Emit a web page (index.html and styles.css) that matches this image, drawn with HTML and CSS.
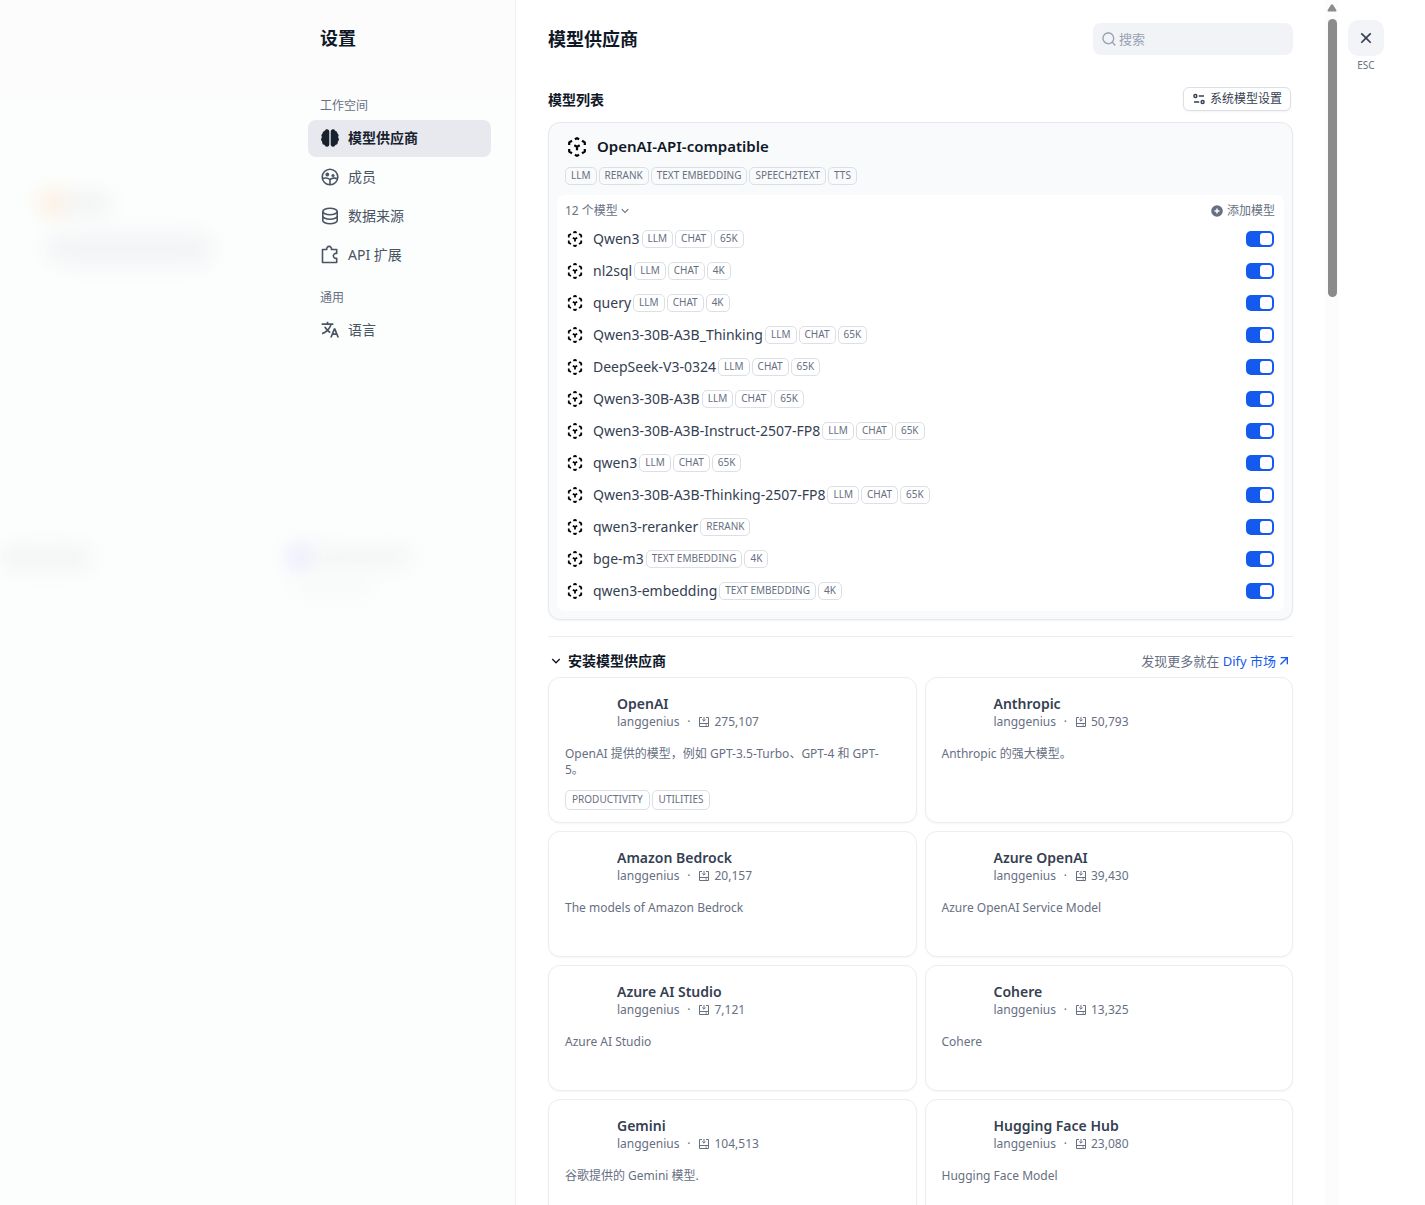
FILE: index.html
```html
<!DOCTYPE html>
<html lang="zh-CN">
<head>
<meta charset="utf-8">
<meta name="viewport" content="width=device-width, initial-scale=1">
<title>设置 - 模型供应商</title>
<link rel="stylesheet" href="styles.css">
</head>
<body>
<svg class="sprite" aria-hidden="true">
  <symbol id="i-cube" viewBox="0 0 20 20"><g fill="none" stroke="currentColor" stroke-width="2.200" stroke-linejoin="round"><path d="M7.900 2.200 10 1.100l2.100 1.100M15 3.700l2.800 1.700v2.600M17.800 12v2.600L15 16.300M12.100 17.800 10 18.900l-2.100-1.100M5 16.300l-2.800-1.700V12M2.200 8V5.400L5 3.700M7.300 8.300 10 9.900l2.700-1.600M10 9.500v3.700"/></g></symbol>
  <symbol id="i-down" viewBox="0 0 24 24"><path fill="currentColor" d="M11.9999 13.1714L16.9497 8.22168L18.3639 9.63589L11.9999 15.9999L5.63599 9.63589L7.0502 8.22168L11.9999 13.1714Z"/></symbol>
  <symbol id="i-install" viewBox="0 0 12 12"><path fill="none" stroke="currentColor" d="M4 1.500H1.500v9h9v-9H8M1.500 7.500h9M6 1v4M4.300 3.500 6 5.200l1.700-1.700M7.500 9h1.400"/></symbol>
</svg>

<div class="settings">
  <div class="backdrop" aria-hidden="true">
    <span class="blob blob-orange"></span><span class="blob blob-title"></span><span class="blob blob-text"></span>
    <span class="blob blob-left"></span><span class="blob blob-violet"></span><span class="blob blob-node"></span>
    <span class="blob blob-sub"></span>
  </div>

  <aside class="sidebar">
    <h1 class="heading">设置</h1>
    <nav class="nav">
      <section class="nav-group">
        <h2 class="nav-label">工作空间</h2>
        <a class="nav-item active" href="#provider"><svg viewBox="0 0 20 20"><g fill="currentColor"><path id="lobe" d="M9.300 3.800V16.200A2.400 2.400 0 0 1 4.600 17 2.600 2.600 0 0 1 2.300 13.800 3 3 0 0 1 2 9.200 2.900 2.900 0 0 1 2.500 5.400 2.500 2.500 0 0 1 4.600 3 2.400 2.400 0 0 1 9.300 3.800Z"/><use href="#lobe" transform="matrix(-1 0 0 1 20 0)"/></g></svg>模型供应商</a>
        <a class="nav-item" href="#members"><svg viewBox="0 0 20 20"><g fill="none" stroke="currentColor" stroke-width="1.600"><circle cx="10" cy="10" r="7.800"/><path d="M2.500 11.800c1.700-1.200 5.700-1.300 7.500 1 1.200-1.900 5.200-2.200 7.500-1M10 12.500V18"/></g><circle cx="7.300" cy="7.500" r="1.900" fill="currentColor"/><circle cx="13" cy="8.500" r="1.600" fill="currentColor"/></svg>成员</a>
        <a class="nav-item" href="#data"><svg viewBox="0 0 20 20"><g fill="none" stroke="currentColor" stroke-width="1.600"><ellipse cx="10" cy="5.500" rx="7.200" ry="3.200"/><path d="M2.800 5.500v9c0 1.800 3.200 3.200 7.200 3.200s7.200-1.400 7.200-3.200v-9M2.800 10c0 1.800 3.200 3.200 7.200 3.200s7.200-1.400 7.200-3.200"/></g></svg>数据来源</a>
        <a class="nav-item" href="#api"><svg viewBox="0 0 20 20"><path fill="none" stroke="currentColor" stroke-width="1.600" stroke-linejoin="round" d="M2.500 4.500h4.300a2.400 2.400 0 1 1 4.600 0h5.300v4a2.500 2.500 0 1 0 0 4.700v4.300H2.500Z"/></svg>API 扩展</a>
      </section>
      <section class="nav-group">
        <h2 class="nav-label">通用</h2>
        <a class="nav-item" href="#language"><svg viewBox="0 0 24 24"><path fill="currentColor" d="M18.5 10L22.9 21H20.745L19.544 18H15.454L14.255 21H12.101L16.5 10H18.5ZM10 2V4H16V6L14.0322 6.0006C13.2425 8.36616 11.9988 10.5057 10.4115 12.301C11.1344 12.9457 11.917 13.5176 12.7475 14.0079L11.9969 15.8855C10.9237 15.2781 9.91944 14.5524 8.99961 13.7249C7.21403 15.332 5.10914 16.5553 2.79891 17.2734L2.26257 15.3442C4.2385 14.7203 6.04543 13.6737 7.59042 12.3021C6.46277 11.0281 5.50873 9.57985 4.76742 8.00028L7.00684 8.00037C7.57018 9.03885 8.23979 10.0033 8.99967 10.877C10.2283 9.46508 11.2205 7.81616 11.9095 6.00101L2 6V4H8V2H10ZM17.5 12.8852L16.253 16H18.745L17.5 12.8852Z"/></svg>语言</a>
      </section>
    </nav>
  </aside>

  <div class="pane">
  <main class="content" id="provider">
    <header class="page-head">
      <h2 class="heading">模型供应商</h2>
      <label class="search">
        <svg viewBox="0 0 24 24"><path fill="currentColor" d="M18.031 16.6168L22.3137 20.8995L20.8995 22.3137L16.6168 18.031C15.0769 19.263 13.124 20 11 20C6.032 20 2 15.968 2 11C2 6.032 6.032 2 11 2C15.968 2 20 6.032 20 11C20 13.124 19.263 15.0769 18.031 16.6168ZM16.0247 15.8748C17.2475 14.6146 18 12.8956 18 11C18 7.1325 14.8675 4 11 4C7.1325 4 4 7.1325 4 11C4 14.8675 7.1325 18 11 18C12.8956 18 14.6146 17.2475 15.8748 16.0247L16.0247 15.8748Z"/></svg>
        <input type="text" placeholder="搜索" aria-label="搜索">
      </label>
    </header>

    <div class="list-head">
      <h3 class="subheading">模型列表</h3>
      <button class="system-btn" type="button"><svg viewBox="0 0 14 14"><g fill="none" stroke="currentColor" stroke-width="1.400"><circle cx="3.400" cy="4" r="1.500"/><path d="M6.800 4H12M2 10h5.200"/><circle cx="10.600" cy="10" r="1.500"/></g></svg>系统模型设置</button>
    </div>

    <section class="provider">
      <div class="provider-name"><svg><use href="#i-cube"/></svg><h3>OpenAI-API-compatible</h3></div>
      <div class="tags provider-tags"><span class="tag">LLM</span><span class="tag">RERANK</span><span class="tag">TEXT EMBEDDING</span><span class="tag">SPEECH2TEXT</span><span class="tag">TTS</span></div>
      <div class="models">
        <div class="models-head">
          <button class="text-btn" type="button">12 个模型<svg><use href="#i-down"/></svg></button>
          <button class="text-btn add" type="button"><svg viewBox="0 0 14 14"><circle cx="7" cy="7" r="5.800" fill="currentColor"/><path d="M7 4.500v5M4.500 7h5" stroke="#fff" stroke-width="1.400"/></svg>添加模型</button>
        </div>
        <ul class="model-list">
          <li class="model"><svg><use href="#i-cube"/></svg><label for="m1">Qwen3</label><span class="tag">LLM</span><span class="tag">CHAT</span><span class="tag">65K</span><input class="switch" id="m1" type="checkbox" role="switch" checked></li>
          <li class="model"><svg><use href="#i-cube"/></svg><label for="m2">nl2sql</label><span class="tag">LLM</span><span class="tag">CHAT</span><span class="tag">4K</span><input class="switch" id="m2" type="checkbox" role="switch" checked></li>
          <li class="model"><svg><use href="#i-cube"/></svg><label for="m3">query</label><span class="tag">LLM</span><span class="tag">CHAT</span><span class="tag">4K</span><input class="switch" id="m3" type="checkbox" role="switch" checked></li>
          <li class="model"><svg><use href="#i-cube"/></svg><label for="m4">Qwen3-30B-A3B_Thinking</label><span class="tag">LLM</span><span class="tag">CHAT</span><span class="tag">65K</span><input class="switch" id="m4" type="checkbox" role="switch" checked></li>
          <li class="model"><svg><use href="#i-cube"/></svg><label for="m5">DeepSeek-V3-0324</label><span class="tag">LLM</span><span class="tag">CHAT</span><span class="tag">65K</span><input class="switch" id="m5" type="checkbox" role="switch" checked></li>
          <li class="model"><svg><use href="#i-cube"/></svg><label for="m6">Qwen3-30B-A3B</label><span class="tag">LLM</span><span class="tag">CHAT</span><span class="tag">65K</span><input class="switch" id="m6" type="checkbox" role="switch" checked></li>
          <li class="model"><svg><use href="#i-cube"/></svg><label for="m7">Qwen3-30B-A3B-Instruct-2507-FP8</label><span class="tag">LLM</span><span class="tag">CHAT</span><span class="tag">65K</span><input class="switch" id="m7" type="checkbox" role="switch" checked></li>
          <li class="model"><svg><use href="#i-cube"/></svg><label for="m8">qwen3</label><span class="tag">LLM</span><span class="tag">CHAT</span><span class="tag">65K</span><input class="switch" id="m8" type="checkbox" role="switch" checked></li>
          <li class="model"><svg><use href="#i-cube"/></svg><label for="m9">Qwen3-30B-A3B-Thinking-2507-FP8</label><span class="tag">LLM</span><span class="tag">CHAT</span><span class="tag">65K</span><input class="switch" id="m9" type="checkbox" role="switch" checked></li>
          <li class="model"><svg><use href="#i-cube"/></svg><label for="m10">qwen3-reranker</label><span class="tag">RERANK</span><input class="switch" id="m10" type="checkbox" role="switch" checked></li>
          <li class="model"><svg><use href="#i-cube"/></svg><label for="m11">bge-m3</label><span class="tag">TEXT EMBEDDING</span><span class="tag">4K</span><input class="switch" id="m11" type="checkbox" role="switch" checked></li>
          <li class="model"><svg><use href="#i-cube"/></svg><label for="m12">qwen3-embedding</label><span class="tag">TEXT EMBEDDING</span><span class="tag">4K</span><input class="switch" id="m12" type="checkbox" role="switch" checked></li>
        </ul>
      </div>
    </section>

    <div class="market-head">
      <h3 class="subheading"><button class="fold" type="button"><svg><use href="#i-down"/></svg>安装模型供应商</button></h3>
      <p class="discover">发现更多就在 <a href="#market">Dify 市场<svg viewBox="0 0 24 24"><path fill="currentColor" d="M16.0037 9.41421L7.39712 18.0208L5.98291 16.6066L14.5895 8H7.00373V6H18.0037V17H16.0037V9.41421Z"/></svg></a></p>
    </div>

    <div class="cards">
      <article class="card"><h4>OpenAI</h4><p class="meta">langgenius<i>·</i><svg><use href="#i-install"/></svg>275,107</p><p class="desc">OpenAI 提供的模型，例如 GPT-3.5-Turbo、GPT-4 和 GPT-<wbr>5。</p><div class="tags"><span class="tag">PRODUCTIVITY</span><span class="tag">UTILITIES</span></div></article>
      <article class="card"><h4>Anthropic</h4><p class="meta">langgenius<i>·</i><svg><use href="#i-install"/></svg>50,793</p><p class="desc">Anthropic 的强大模型。</p></article>
      <article class="card"><h4>Amazon Bedrock</h4><p class="meta">langgenius<i>·</i><svg><use href="#i-install"/></svg>20,157</p><p class="desc">The models of Amazon Bedrock</p></article>
      <article class="card"><h4>Azure OpenAI</h4><p class="meta">langgenius<i>·</i><svg><use href="#i-install"/></svg>39,430</p><p class="desc">Azure OpenAI Service Model</p></article>
      <article class="card"><h4>Azure AI Studio</h4><p class="meta">langgenius<i>·</i><svg><use href="#i-install"/></svg>7,121</p><p class="desc">Azure AI Studio</p></article>
      <article class="card"><h4>Cohere</h4><p class="meta">langgenius<i>·</i><svg><use href="#i-install"/></svg>13,325</p><p class="desc">Cohere</p></article>
      <article class="card"><h4>Gemini</h4><p class="meta">langgenius<i>·</i><svg><use href="#i-install"/></svg>104,513</p><p class="desc">谷歌提供的 Gemini 模型.</p></article>
      <article class="card"><h4>Hugging Face Hub</h4><p class="meta">langgenius<i>·</i><svg><use href="#i-install"/></svg>23,080</p><p class="desc">Hugging Face Model</p></article>
    </div>
  </main>
  <div class="scrollbar" aria-hidden="true"><svg viewBox="0 0 10 8"><path fill="#8b8b8b" d="M4 .8q1-1.200 2 0L9.300 6q.5 1.500-1 1.500H1.700Q.2 7.500.7 6Z"/></svg><div class="thumb"></div></div>
  </div>

  <div class="close-col">
    <button class="close" type="button" aria-label="关闭"><svg viewBox="0 0 24 24"><path fill="currentColor" d="M11.9997 10.5865L16.9495 5.63672L18.3637 7.05093L13.4139 12.0007L18.3637 16.9504L16.9495 18.3646L11.9997 13.4149L7.04996 18.3646L5.63574 16.9504L10.5855 12.0007L5.63574 7.05093L7.04996 5.63672L11.9997 10.5865Z"/></svg></button>
    <span class="esc">ESC</span>
  </div>
</div>
</body>
</html>
```

FILE: styles.css
```css
* { box-sizing: border-box; }

body {
  margin: 0;
  font-family: "Noto Sans", "Noto Sans CJK SC", sans-serif;
  font-size: 14px;
  line-height: 20px;
  color: #354052;
  background: #fff;
}

h1, h2, h3, h4, p, ul { margin: 0; padding: 0; }
h1, h2, h3, h4 { font-weight: 600; }
ul { list-style: none; }
a { color: inherit; text-decoration: none; }
button { padding: 0; border: 0; background: none; color: inherit; font: inherit; cursor: pointer; }
svg { display: block; flex: none; }
.sprite { display: none; }

.settings {
  display: grid;
  grid-template-columns: 292fr 224px 823fr 86px;
  height: 100vh;
  overflow: hidden;
}

/* dimmed workspace behind the dialog */
.backdrop { position: relative; background: linear-gradient(#fcfcfc 100px, #fcfefd 100px); }
.blob { position: absolute; z-index: 1; border-radius: 20px; filter: blur(10px); }
.blob-orange { left: 38px; top: 190px; width: 30px; height: 26px; background: #fdeedf; }
.blob-title { left: 66px; top: 194px; width: 44px; height: 18px; background: #efeff0; }
.blob-text { left: 46px; top: 232px; width: 168px; height: 34px; background: #f3f4f6; }
.blob-left { left: 0; top: 546px; width: 92px; height: 24px; background: #f3f4f4; }
.blob-violet { left: 286px; top: 544px; width: 30px; height: 26px; background: #ebebfd; }
.blob-node { left: 316px; top: 546px; width: 96px; height: 22px; background: #f4f5f5; }
.blob-sub { left: 296px; top: 574px; width: 76px; height: 24px; background: #f8f9f9; }

.sidebar {
  padding: 24px 24px 0 16px;
  border-right: 1px solid #f1f1f3;
  background: linear-gradient(#fcfcfc 100px, #fcfefd 100px);
}
.heading { font-size: 18px; line-height: 28px; color: #101828; }
.sidebar .heading { padding-left: 12px; }
.nav { position: relative; z-index: 2; display: grid; gap: 14px; margin-top: 44px; }
.nav-group { display: grid; gap: 2px; }
.nav-label { margin-bottom: 2px; padding-left: 12px; font-size: 12px; line-height: 20px; font-weight: 400; color: #676f83; }
.nav-item { display: flex; align-items: center; gap: 8px; height: 37px; padding: 0 12px 1px; border-radius: 8px; color: #495464; }
.nav-item svg { width: 20px; height: 20px; }
.nav-item.active { background: #e7e9ee; color: #18222f; font-weight: 600; }

.pane { display: flex; min-width: 0; height: 100vh; }
.content { flex: 1; min-width: 0; padding: 23px 32px 0; overflow-y: auto; scrollbar-width: none; }
.page-head, .list-head, .models-head, .market-head { display: flex; align-items: center; justify-content: space-between; }
.search { display: flex; align-items: center; gap: 2px; width: 200px; height: 32px; padding: 0 8px; border-radius: 8px; background: #f1f3f7; color: #98a2b2; }
.search svg { width: 16px; height: 16px; }
.search input { flex: 1; min-width: 0; padding: 0; border: 0; outline: 0; background: none; font: inherit; font-size: 13px; color: #354052; }
.search input::placeholder { color: #98a2b2; }

.list-head { align-items: flex-end; margin: 32px 2px 11px 0; }
.subheading { font-size: 14px; line-height: 22px; color: #101828; }
.system-btn { display: flex; align-items: center; gap: 4px; height: 24px; padding: 0 8px; border: 1px solid #dcdfe4; border-radius: 6px; background: #fff; box-shadow: 0 1px 2px #1018280d; font-size: 12px; }
.system-btn svg { width: 14px; height: 14px; }

.provider { padding: 12px 8px 8px; border: 1px solid #e6e8ec; border-radius: 12px; background: #f9fafb; box-shadow: 0 1px 2px #1018280d; }
.provider-name { display: flex; align-items: center; gap: 10px; height: 24px; padding-left: 10px; color: #101828; }
.provider-name svg { width: 20px; height: 20px; color: #000; }
.provider-name h3 { padding-bottom: 2px; font-size: 15px; line-height: 22px; }
.tags { display: flex; gap: 2px; }
.tag { height: 18px; padding: 0 5px; border: 1px solid #dcdfe4; border-radius: 5px; font-size: 10px; line-height: 15px; color: #676f83; white-space: nowrap; }
.provider-tags { margin: 8px 8px 10px; }
.models { padding: 4px 0; border-radius: 8px; background: #fff; }
.models-head { height: 24px; padding: 0 9px 0 8px; }
.text-btn { display: flex; align-items: center; font-size: 12px; color: #676f83; }
.text-btn svg { width: 14px; height: 14px; }
.add { gap: 3px; }
.model { display: flex; align-items: center; gap: 2px; height: 32px; padding: 0 10px; }
.model svg { width: 16px; height: 16px; margin-right: 8px; color: #000; }
.model label { font-size: 14px; }
.switch { appearance: none; display: flex; justify-content: flex-end; width: 28px; height: 16px; margin: 0 0 0 auto; padding: 2px; border-radius: 5px; background: #d0d5dc; cursor: pointer; }
.switch::before { content: ""; width: 12px; height: 12px; border-radius: 3px; background: #fff; }
.switch:checked { background: #155aef; }
.switch:not(:checked) { justify-content: flex-start; }

.market-head { height: 41px; margin-top: 16px; padding: 7px 1px 0 0; border-top: 1px solid #e9ebee; }
.fold { display: flex; align-items: center; gap: 4px; font-weight: 600; }
.fold svg { width: 16px; height: 16px; }
.discover { display: flex; font-size: 13px; color: #676f83; white-space: pre; }
.discover a { display: flex; align-items: center; color: #155aef; }
.discover svg { width: 16px; height: 16px; }

.cards { display: grid; grid-template-columns: repeat(2, minmax(0, 1fr)); gap: 8px; }
.card { padding: 16px 16px 12px; border: 1px solid #ecedf0; border-radius: 12px; background: #fff; box-shadow: 0 1px 2px #1018280a; }
.card h4 { padding-left: 52px; font-size: 14px; line-height: 20px; }
.meta { display: flex; align-items: center; padding-left: 52px; font-size: 12px; line-height: 16px; color: #676f83; }
.meta i { width: 19px; text-align: center; font-style: normal; }
.meta svg { width: 12px; height: 12px; margin-right: 4px; }
.desc { height: 32px; margin: 16px 0 12px; padding-right: 8px; font-size: 12px; line-height: 16px; color: #676f83; }
.card .tag { height: 20px; padding: 0 6px; line-height: 17px; }

.scrollbar { display: flex; flex-direction: column; align-items: center; gap: 7px; width: 14px; padding-top: 4px; background: #fcfcfc; }
.scrollbar svg { width: 10px; height: 8px; }
.thumb { width: 9px; height: 278px; border-radius: 5px; background: #8b8b8b; }

.close-col { display: flex; flex-direction: column; align-items: center; gap: 1px; width: 54px; padding-top: 20px; }
.close { display: grid; place-items: center; width: 36px; height: 36px; border-radius: 10px; background: #f2f4f7; }
.close svg { width: 20px; height: 20px; }
.esc { font-size: 10px; line-height: 16px; color: #676f83; }
```
